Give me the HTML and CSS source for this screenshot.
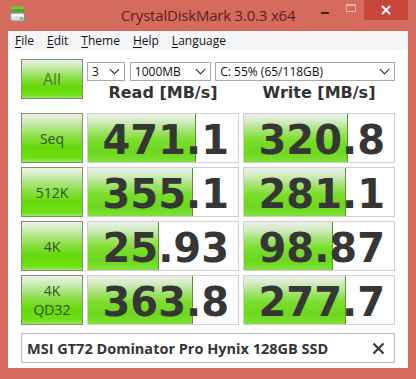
FILE: index.html
```html
<!DOCTYPE html>
<html>
<head>
<meta charset="utf-8">
<link rel="stylesheet" href="styles.css">
</head>
<body>
<div class="window">
  <div class="titlebar">
    <div class="tb-left">
      <svg class="app-icon" width="16" height="16" viewBox="0 0 16 16">
        <rect x="1" y="0.5" width="13" height="2.5" rx="1" fill="#5fd43a"/>
        <rect x="1" y="3.5" width="13" height="2.5" rx="1" fill="#3fb21e"/>
        <rect x="0.5" y="7" width="14" height="8" rx="2" fill="#d8dde0" stroke="#8b9296" stroke-width="1"/>
        <rect x="1.5" y="8" width="12" height="2.5" fill="#f4f6f7"/>
        <rect x="10" y="11.5" width="3" height="2" fill="#46c42a"/>
      </svg>
    </div>
    <div class="title">CrystalDiskMark 3.0.3 x64</div>
    <div class="tb-right">
      <span class="ctl ctl-min"><span class="min-bar"></span></span>
      <span class="ctl ctl-max"><span class="max-box"></span></span>
      <span class="ctl ctl-close">
        <svg width="10" height="10" viewBox="0 0 10 10"><path d="M1 1 L9 9 M9 1 L1 9" stroke="#fff" stroke-width="2"/></svg>
      </span>
    </div>
  </div>
  <div class="client">
    <div class="menubar">
      <span><u>F</u>ile</span>
      <span><u>E</u>dit</span>
      <span><u>T</u>heme</span>
      <span><u>H</u>elp</span>
      <span><u>L</u>anguage</span>
    </div>
    <div class="content">
      <div class="grid">
        <div class="btn btn-all">All</div>
        <div class="head">
          <div class="selects">
            <div class="sel sel-n"><span>3</span><i class="chev"></i></div>
            <div class="sel sel-size"><span>1000MB</span><i class="chev"></i></div>
            <div class="sel sel-drive"><span>C: 55% (65/118GB)</span><i class="chev"></i></div>
          </div>
          <div class="cols">
            <div class="colhead">Read [MB/s]</div>
            <div class="colhead">Write [MB/s]</div>
          </div>
        </div>

        <div class="btn">Seq</div>
        <div class="res"><div class="fill" style="width:72%"></div><span class="val">471.1</span></div>
        <div class="res"><div class="fill" style="width:69%"></div><span class="val">320.8</span></div>

        <div class="btn">512K</div>
        <div class="res"><div class="fill" style="width:70%"></div><span class="val">355.1</span></div>
        <div class="res"><div class="fill" style="width:68%"></div><span class="val">281.1</span></div>

        <div class="btn">4K</div>
        <div class="res"><div class="fill" style="width:47%"></div><span class="val">25.93</span></div>
        <div class="res"><div class="fill" style="width:59%"></div><span class="val">98.87</span></div>

        <div class="btn btn-two">4K<br>QD32</div>
        <div class="res"><div class="fill" style="width:70%"></div><span class="val">363.8</span></div>
        <div class="res"><div class="fill" style="width:68%"></div><span class="val">277.7</span></div>
      </div>
      <div class="comment">
        <span>MSI GT72 Dominator Pro Hynix 128GB SSD</span>
        <svg class="x" width="13" height="13" viewBox="0 0 13 13"><path d="M1.5 1.5 L11.5 11.5 M11.5 1.5 L1.5 11.5" stroke="#3a3a3a" stroke-width="2.2"/></svg>
      </div>
    </div>
  </div>
</div>
</body>
</html>
```

FILE: styles.css
```css
* { box-sizing: border-box; }
html, body { margin: 0; padding: 0; }
body {
  width: 416px;
  height: 379px;
  background: #d56a5e;
  font-family: "Open Sans", "Noto Sans", sans-serif;
  overflow: hidden;
}
.window {
  display: flex;
  flex-direction: column;
  height: 379px;
}
.titlebar {
  height: 31px;
  display: grid;
  grid-template-columns: 1fr auto 1fr;
  align-items: start;
}
.tb-left { padding: 6px 0 0 10px; }
.app-icon { display: block; }
.title {
  font-family: "Open Sans", sans-serif;
  font-size: 15px;
  color: #5a231d;
  line-height: 20px;
  padding-top: 5px;
  letter-spacing: -0.2px;
}
.tb-right {
  display: flex;
  justify-content: flex-end;
  padding-right: 8px;
}
.ctl {
  height: 20px;
  display: flex;
  align-items: center;
  justify-content: center;
}
.ctl-min { width: 26px; }
.min-bar { width: 8px; height: 2px; background: #3b2220; margin-top: 6px; }
.ctl-max { width: 26px; }
.max-box { width: 10px; height: 8px; border: 1px solid #eab3ac; border-top-width: 2px; margin-top: -4px; }
.ctl-close {
  width: 44px;
  background: #c8473b;
}
.ctl-close svg { display: block; }
.client {
  margin: 0 8px 11px 8px;
  flex: 1;
  background: #fff;
  display: flex;
  flex-direction: column;
}
.menubar {
  height: 19px;
  background: #f5f6f8;
  display: flex;
  gap: 13px;
  padding-left: 7px;
  font-size: 12px;
  line-height: 19px;
  color: #111;
}
.menubar u { text-decoration-thickness: 1px; text-underline-offset: 2px; }
.content {
  padding: 9px 0 0 13px;
}
.grid {
  display: grid;
  grid-template-columns: 62px 152px 152px;
  grid-template-rows: repeat(5, 50px);
  column-gap: 4px;
  row-gap: 4px;
}
.btn {
  border: 1px solid #7f8a7a;
  background: linear-gradient(to bottom, #eef3ea 0%, #c9eab0 18%, #8fe04c 45%, #66d90a 70%, #6ee015 92%, #9aea5e 100%);
  display: flex;
  align-items: center;
  justify-content: center;
  text-align: center;
  font-size: 14px;
  line-height: 19px;
  color: #33502a;
}
.btn-all { height: 40px; font-size: 16px; color: #4d7a33; }
.head {
  grid-column: 2 / span 2;
  display: flex;
  flex-direction: column;
}
.selects {
  display: flex;
  gap: 4px;
  margin-top: 3px;
  height: 19px;
}
.sel {
  border: 1px solid #a9a9a9;
  background: #fff;
  display: flex;
  align-items: center;
  justify-content: space-between;
  padding: 0 6px 0 4px;
  font-size: 12px;
  color: #111;
  line-height: 17px;
}
.sel-n { width: 38px; }
.sel-size { width: 82px; margin-left: 1px; }
.sel-drive { width: 181px; }
.chev {
  width: 7px;
  height: 7px;
  border-right: 1.6px solid #222;
  border-bottom: 1.6px solid #222;
  transform: rotate(45deg);
  margin-top: -4px;
}
.cols {
  display: grid;
  grid-template-columns: 152px 152px;
  column-gap: 4px;
  margin-top: 2px;
}
.colhead {
  text-align: center;
  font-family: "DejaVu Sans", sans-serif;
  font-weight: bold;
  font-size: 16px;
  line-height: 20px;
  color: #333;
}
.res {
  position: relative;
  border: 1px solid #cfcfcf;
  background: #fff;
  overflow: hidden;
}
.fill {
  position: absolute;
  left: 0; top: 0; bottom: 0;
  background: linear-gradient(to bottom, #edf0ea 0%, #d4ebc4 15%, #a4e372 35%, #7bdd2c 55%, #6cd81c 80%, #80e03a 100%);
  border-right: 1px solid #4f9a2a;
}
.val {
  position: relative;
  display: block;
  text-align: right;
  padding-right: 9px;
  font-family: "DejaVu Sans", sans-serif;
  font-weight: bold;
  font-size: 40px;
  line-height: 50px;
  color: #363636;
  margin-top: 1px;
}
.comment {
  margin-top: 8px;
  width: 374px;
  height: 30px;
  border: 1px solid #b9b9b9;
  display: flex;
  align-items: center;
  justify-content: space-between;
  padding: 0 9px 0 5px;
  font-family: "Open Sans", sans-serif;
  font-weight: bold;
  font-size: 14.5px;
  color: #353535;
}
.x { display: block; }
```
